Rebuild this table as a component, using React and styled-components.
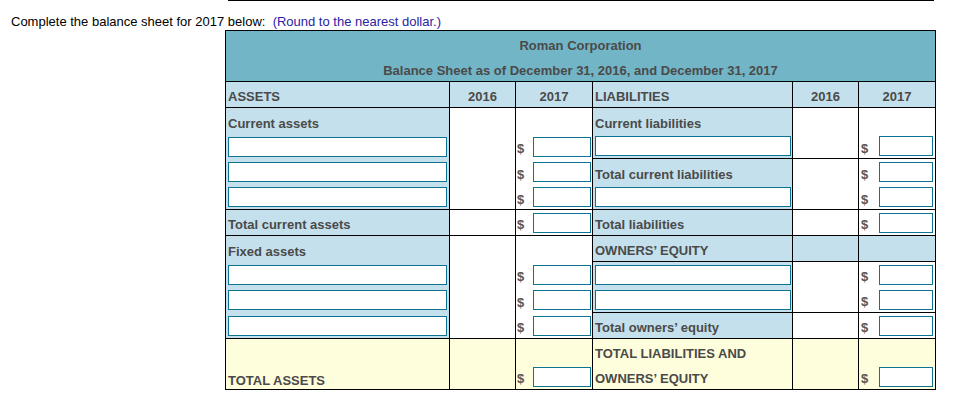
import React from "react";
import styled, { createGlobalStyle } from "styled-components";

const Global = createGlobalStyle`
  html, body { margin: 0; padding: 0; background: #ffffff; }
  body { font-family: "Liberation Sans", Arial, sans-serif; }
`;

const Page = styled.div`
  width: 967px;
  height: 394px;
  overflow: hidden;
`;

const TopRule = styled.div`
  margin-left: 228px;
  width: 706px;
  border-top: 1px solid #000;
`;

const Intro = styled.p`
  margin: 12px 0 0 11px;
  font-size: 13px;
  line-height: 17px;
  color: #000;
  white-space: pre;
`;

const Hint = styled.span`
  color: #2b22a3;
`;

const Sheet = styled.div`
  margin-left: 225px;
  display: grid;
  grid-template-columns: 224px 66px 77px 200px 66px 77px;
  grid-template-rows: 51px 26px 26px 25px 26px 25px 26px 26px 25px 26px 26px 25px 26px;
  width: max-content;
  border-left: 1px solid #000;
  border-top: 1px solid #000;
  font-size: 13px;
  font-weight: bold;
  color: #4a4a4a;
`;

const Title = styled.div`
  grid-column: 1 / -1;
  background: #72b5c6;
  border-right: 1px solid #000;
  border-bottom: 1px solid #000;
  box-sizing: border-box;
  display: flex;
  flex-direction: column;
  align-items: center;
  padding-top: 2px;
  line-height: 25px;
`;

const bgs = {
  blue: "#c4e0ec",
  white: "#ffffff",
  yellow: "#fefedd",
};

const Cell = styled.div`
  box-sizing: border-box;
  background: ${(p) => bgs[p.$bg]};
  border-right: 1px solid #000;
  border-bottom: ${(p) => (p.$edge ? "1px solid #000" : "none")};
  display: flex;
  align-items: center;
  justify-content: ${(p) => (p.$center ? "center" : "flex-start")};
  padding: ${(p) => (p.$low ? "8px" : "4px")} 0 0 ${(p) => p.$pad}px;
  white-space: nowrap;
  min-width: 0;
  overflow: hidden;
`;

const TextBox = styled.input.attrs({ type: "text" })`
  box-sizing: border-box;
  height: 20px;
  width: ${(p) => p.$w}px;
  margin: -4px ${(p) => p.$right}px 0 auto;
  border: 1px solid #0c7393;
  background: #fff;
  padding: 0;
  outline: none;
`;

const NameBox = styled(TextBox)`
  margin: -4px 0 0 0;
`;

const Dollar = styled.span`
  font-size: 13px;
  font-weight: bold;
  color: #555;
`;

const LEFT = [
  { t: "label", text: "Current assets" },
  { t: "input" },
  { t: "input" },
  { t: "input", edge: true },
  { t: "label", text: "Total current assets", money: true, edge: true },
  { t: "label", text: "Fixed assets" },
  { t: "input" },
  { t: "input" },
  { t: "input", edge: true },
  { t: "total" },
  { t: "total", text: "TOTAL ASSETS", money: true, edge: true, low: true },
];

const RIGHT = [
  { t: "label", text: "Current liabilities" },
  { t: "input", edge: true },
  { t: "label", text: "Total current liabilities", money: true },
  { t: "input", edge: true },
  { t: "label", text: "Total liabilities", money: true, edge: true },
  { t: "head", text: "OWNERS\u2019 EQUITY", edge: true },
  { t: "input" },
  { t: "input", edge: true },
  { t: "label", text: "Total owners\u2019 equity", money: true, edge: true },
  { t: "total", text: "TOTAL LIABILITIES AND" },
  { t: "total", text: "OWNERS\u2019 EQUITY", money: true, edge: true },
];

const SIDES = {
  l: { nameW: 219, amountW: 58, right: 1, dollarPad: 1 },
  r: { nameW: 196, amountW: 54, right: 2, dollarPad: 2 },
};

function Side({ row, side }) {
  const s = SIDES[side];
  const isInput = row.t === "input";
  const labelBg = row.t === "total" ? "yellow" : "blue";
  const yearBg = row.t === "total" ? "yellow" : row.t === "head" ? "blue" : "white";
  const hasMoney = isInput || row.money;
  return (
    <>
      <Cell $bg={labelBg} $edge={row.edge} $pad={2} $low={row.low}>
        {isInput ? <NameBox $w={s.nameW} /> : row.text}
      </Cell>
      <Cell $bg={yearBg} $edge={row.edge} $pad={0} />
      <Cell $bg={yearBg} $edge={row.edge} $pad={s.dollarPad}>
        {hasMoney && (
          <>
            <Dollar>$</Dollar>
            <TextBox $w={s.amountW} $right={s.right} />
          </>
        )}
      </Cell>
    </>
  );
}

export default function App() {
  return (
    <Page>
      <Global />
      <TopRule />
      <Intro>
        Complete the balance sheet for 2017 below:  <Hint>(Round to the nearest dollar.)</Hint>
      </Intro>
      <Sheet>
        <Title>
          <span>Roman Corporation</span>
          <span>Balance Sheet as of December 31, 2016, and December 31, 2017</span>
        </Title>
        <Cell $bg="blue" $edge $pad={2}>ASSETS</Cell>
        <Cell $bg="blue" $edge $pad={0} $center>2016</Cell>
        <Cell $bg="blue" $edge $pad={0} $center>2017</Cell>
        <Cell $bg="blue" $edge $pad={2}>LIABILITIES</Cell>
        <Cell $bg="blue" $edge $pad={0} $center>2016</Cell>
        <Cell $bg="blue" $edge $pad={0} $center>2017</Cell>
        {LEFT.map((row, i) => (
          <React.Fragment key={i}>
            <Side row={row} side="l" />
            <Side row={RIGHT[i]} side="r" />
          </React.Fragment>
        ))}
      </Sheet>
    </Page>
  );
}
